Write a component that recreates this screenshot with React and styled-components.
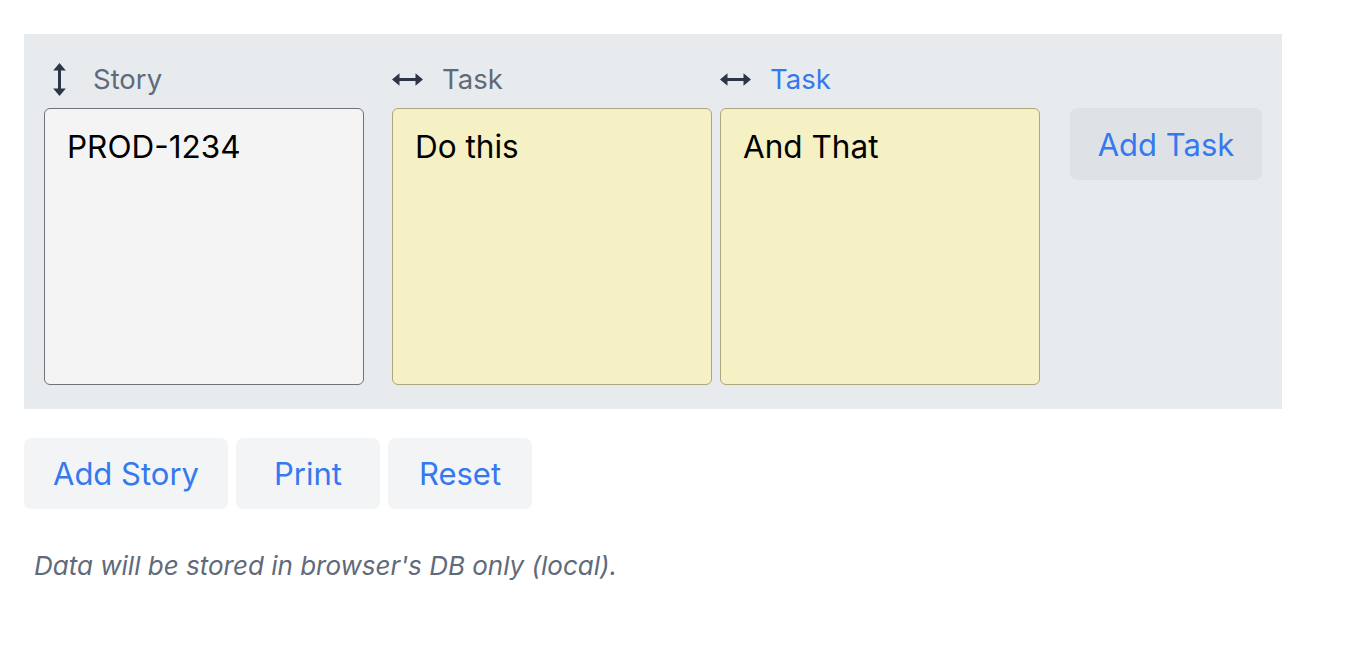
import styled, { createGlobalStyle } from "styled-components";

const GlobalStyle = createGlobalStyle`
  body {
    margin: 0;
    background: #fff;
    font-family: Inter, "Noto Sans", sans-serif;
  }
`;

const Page = styled.div`
  padding: 34px 24px;
`;

const Board = styled.div`
  display: inline-flex;
  align-items: flex-start;
  background: #e7ebee;
  padding: 28px 20px 24px 20px;
`;

const Column = styled.div`
  display: flex;
  flex-direction: column;
  margin-right: ${(p) => p.$gap || 0}px;
`;

const Label = styled.div`
  display: flex;
  align-items: center;
  height: 34px;
  margin-bottom: 12px;
  font-size: 27.5px;
  color: ${(p) => (p.$active ? "#3579ef" : "#5f6a7a")};
  svg {
    margin-left: ${(p) => (p.$vertical ? "9px" : "0")};
    margin-right: ${(p) => (p.$vertical ? "27px" : "19px")};
  }
`;

const Card = styled.div`
  box-sizing: border-box;
  width: 320px;
  height: 277px;
  border-radius: 6px;
  padding: 18px 22px;
  font-size: 31.5px;
  color: #000;
  background: ${(p) => (p.$story ? "#f4f4f4" : "#f5f1c4")};
  border: ${(p) => (p.$story ? "1.8px solid #6f7276" : "1.5px solid #aea77c")};
`;

const Button = styled.button`
  box-sizing: border-box;
  height: ${(p) => (p.$big ? 72 : 71)}px;
  min-width: 144px;
  ${(p) => p.$big && "width: 192px;"}
  padding: ${(p) => (p.$big ? "0" : "0 29px")};
  border: none;
  border-radius: 7px;
  font-family: inherit;
  font-size: 31px;
  color: #3579ef;
  background: ${(p) => (p.$onPanel ? "#dee2e6" : "#f2f4f6")};
  cursor: pointer;
`;

const AddTaskWrap = styled.div`
  padding-top: 46px;
`;

const Actions = styled.div`
  display: flex;
  gap: 8px;
  margin-top: 29px;
`;

const Note = styled.p`
  margin: 41px 0 0 10px;
  font-size: 26px;
  font-style: italic;
  color: #5f6a7a;
`;

const VArrow = () => (
  <svg width="13" height="33" viewBox="0 0 13 33">
    <path d="M6.5 3v27" stroke="#2b3648" strokeWidth="3" />
    <path d="M6.5 0L12.8 7.5H0.2z" fill="#2b3648" />
    <path d="M6.5 33L12.8 25.5H0.2z" fill="#2b3648" />
  </svg>
);

const HArrow = () => (
  <svg width="31" height="13" viewBox="0 0 31 13">
    <path d="M3 6.5h25" stroke="#2b3648" strokeWidth="3" />
    <path d="M0 6.5L7.5 0.2V12.8z" fill="#2b3648" />
    <path d="M31 6.5L23.5 0.2V12.8z" fill="#2b3648" />
  </svg>
);

const tasks = [
  { id: 1, text: "Do this" },
  { id: 2, text: "And That", active: true },
];

export default function App() {
  return (
    <Page>
      <GlobalStyle />
      <Board>
        <Column $gap={28}>
          <Label $vertical>
            <VArrow />
            Story
          </Label>
          <Card $story>PROD-1234</Card>
        </Column>
        {tasks.map((t, i) => (
          <Column key={t.id} $gap={i === tasks.length - 1 ? 30 : 8}>
            <Label $active={t.active}>
              <HArrow />
              Task
            </Label>
            <Card>{t.text}</Card>
          </Column>
        ))}
        <AddTaskWrap>
          <Button $onPanel $big>
            Add Task
          </Button>
        </AddTaskWrap>
      </Board>
      <Actions>
        <Button>Add Story</Button>
        <Button>Print</Button>
        <Button>Reset</Button>
      </Actions>
      <Note>Data will be stored in browser's DB only (local).</Note>
    </Page>
  );
}
